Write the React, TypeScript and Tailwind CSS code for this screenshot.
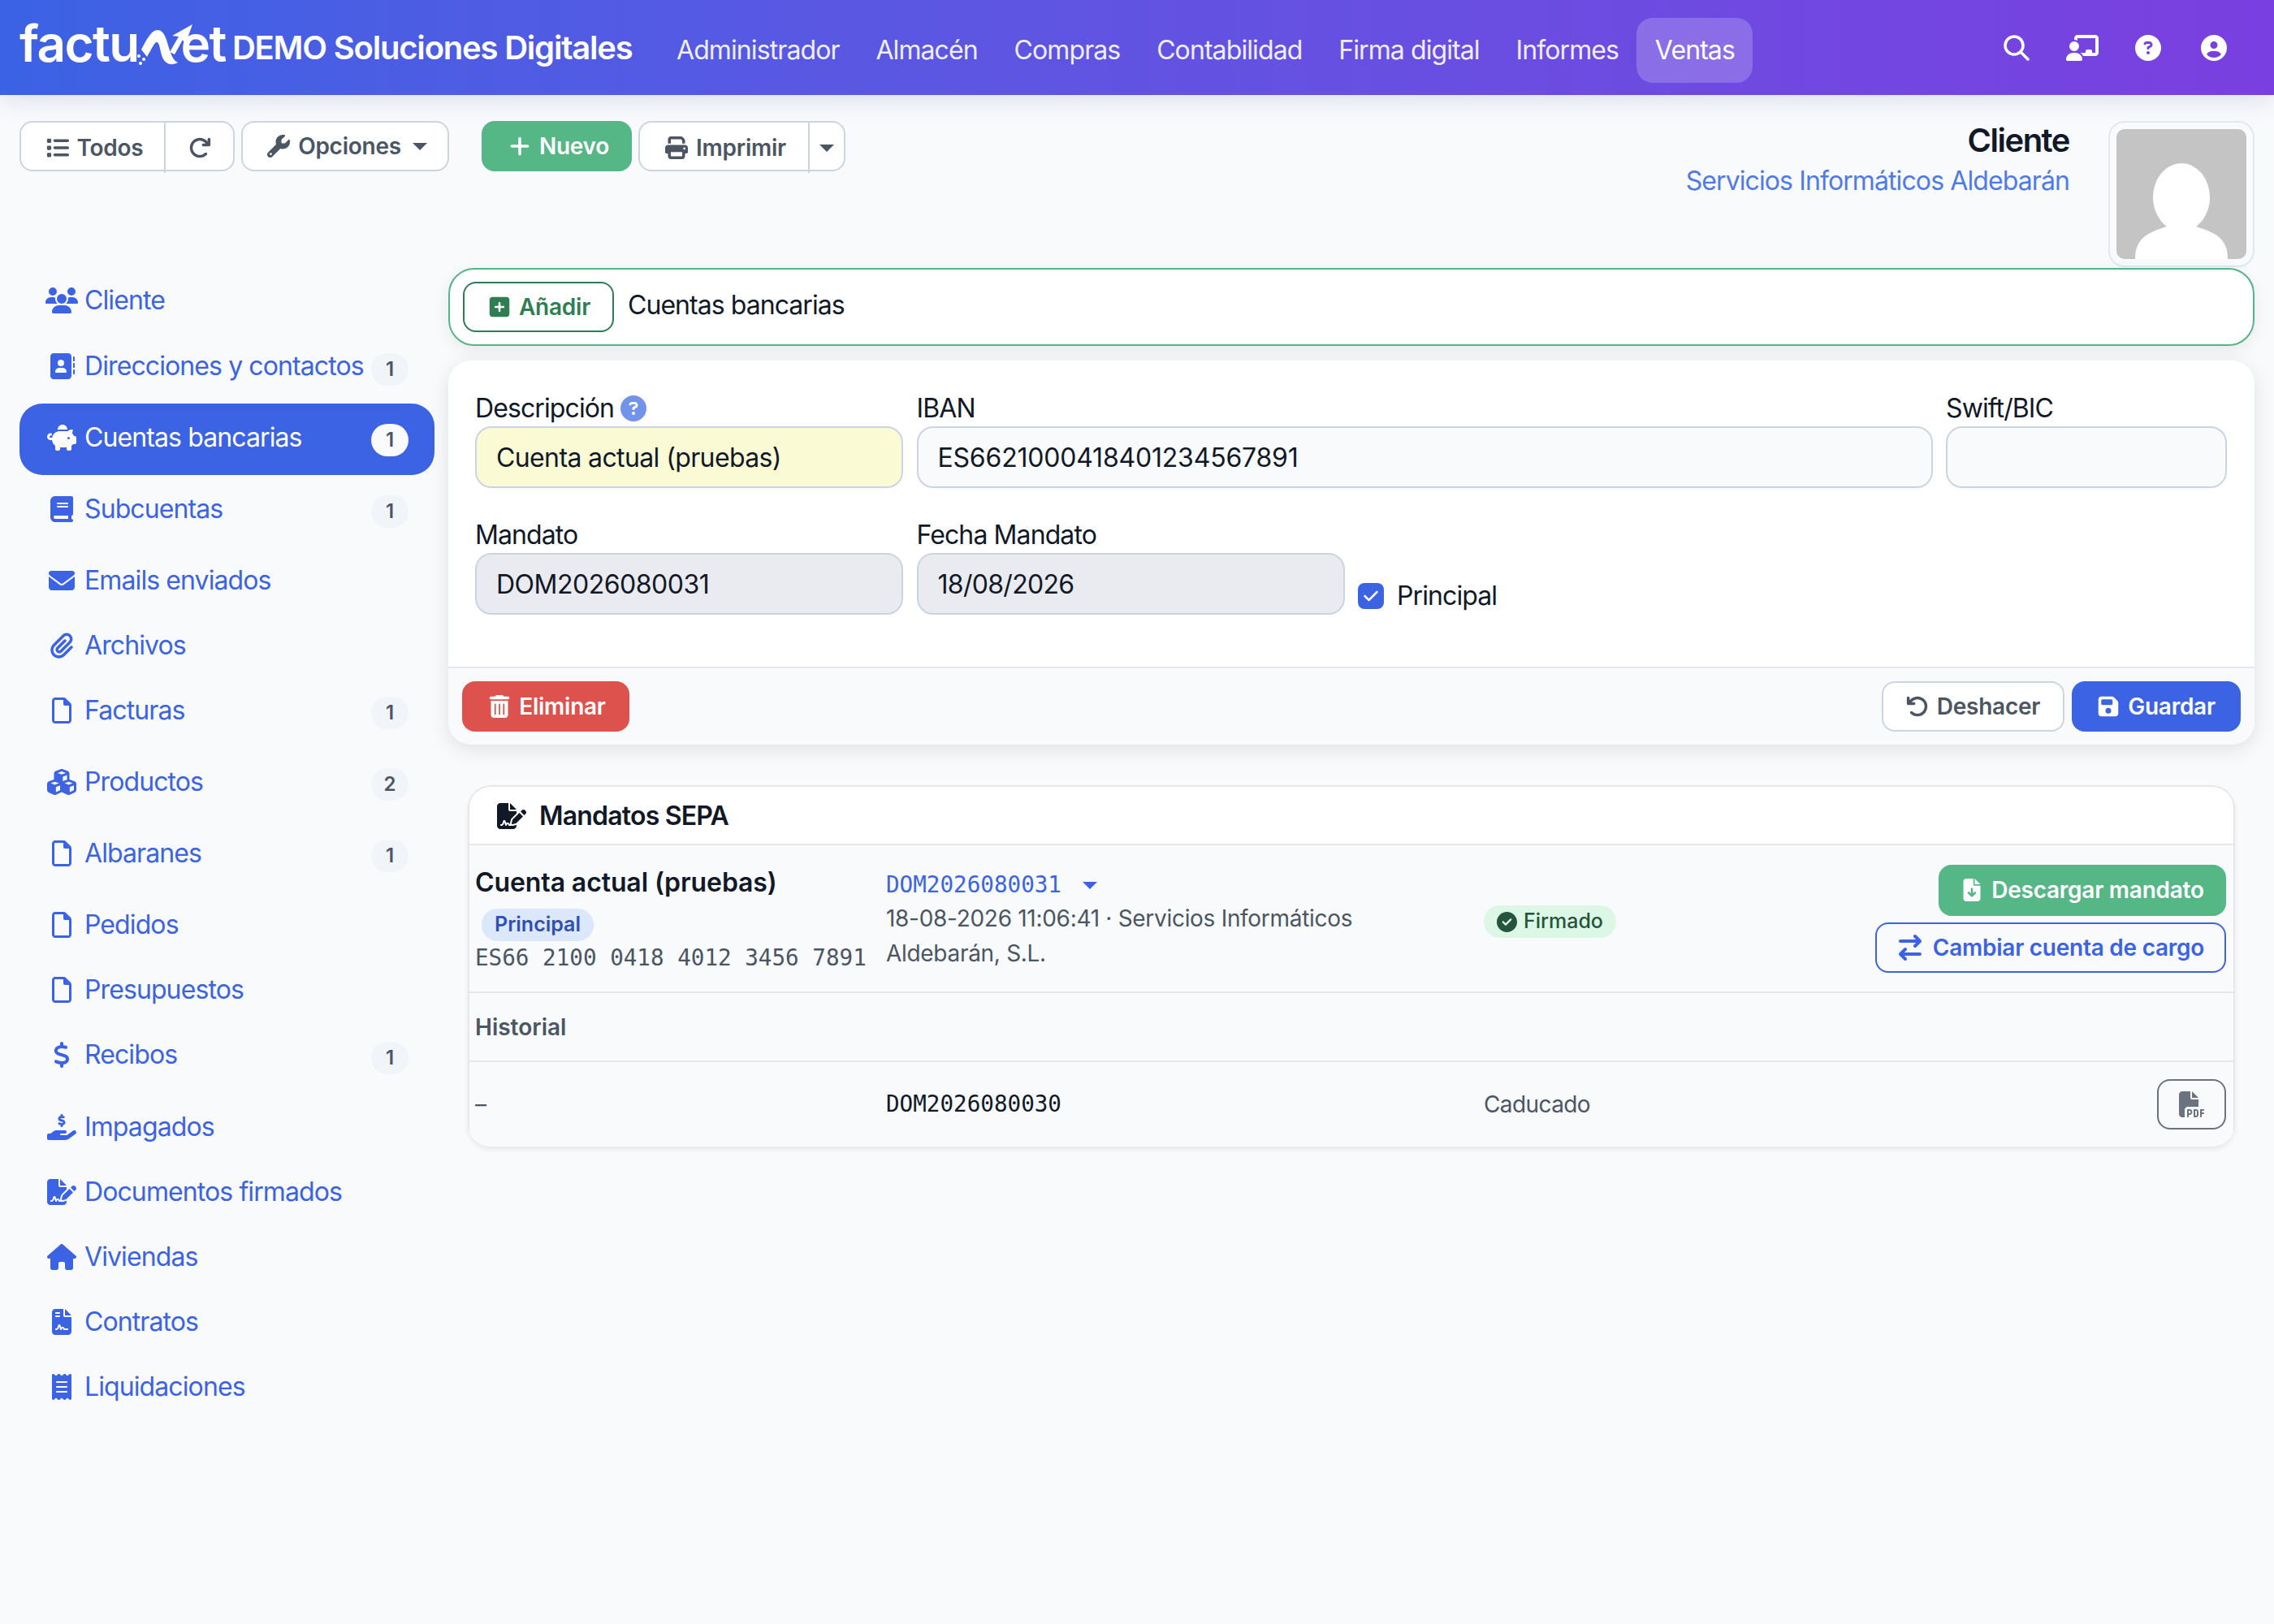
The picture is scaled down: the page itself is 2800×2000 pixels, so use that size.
import React from 'react';
import {
  FaUsers, FaAddressBook, FaPiggyBank, FaBook, FaEnvelope, FaPaperclip, FaRegFile, FaCubes,
  FaDollarSign, FaHandHoldingDollar, FaFileSignature, FaHouse, FaFileContract, FaReceipt, FaList,
  FaArrowRotateRight, FaWrench, FaPlus, FaPrint, FaCircleQuestion, FaCircleUser, FaSquarePlus,
  FaTrashCan, FaArrowRotateLeft, FaFloppyDisk, FaFileArrowDown, FaArrowRightArrowLeft, FaCircleCheck,
  FaChalkboardUser, FaCheck, FaFilePdf,
} from 'react-icons/fa6';

const navItems = ['Administrador', 'Almacén', 'Compras', 'Contabilidad', 'Firma digital', 'Informes', 'Ventas'];

const sideItems = [
  { label: 'Cliente', icon: FaUsers, row: 'h-[80px]' },
  { label: 'Direcciones y contactos', icon: FaAddressBook, badge: '1', row: 'h-[87px]' },
  { label: 'Cuentas bancarias', icon: FaPiggyBank, badge: '1', active: true, row: 'h-[88px]' },
  { label: 'Subcuentas', icon: FaBook, badge: '1', row: 'h-[88px]' },
  { label: 'Emails enviados', icon: FaEnvelope, row: 'h-[80px] pt-[3px]' },
  { label: 'Archivos', icon: FaPaperclip, row: 'h-[80px] pt-[3px]' },
  { label: 'Facturas', icon: FaRegFile, badge: '1', row: 'h-[88px]' },
  { label: 'Productos', icon: FaCubes, badge: '2', row: 'h-[88px]' },
  { label: 'Albaranes', icon: FaRegFile, badge: '1', row: 'h-[88px]' },
  { label: 'Pedidos', icon: FaRegFile, row: 'h-[80px] pt-[3px]' },
  { label: 'Presupuestos', icon: FaRegFile, row: 'h-[80px] pt-[3px]' },
  { label: 'Recibos', icon: FaDollarSign, badge: '1', row: 'h-[89px]' },
  { label: 'Impagados', icon: FaHandHoldingDollar, row: 'h-[80px] pt-[3px]' },
  { label: 'Documentos firmados', icon: FaFileSignature, row: 'h-[80px] pt-[3px]' },
  { label: 'Viviendas', icon: FaHouse, row: 'h-[80px] pt-[3px]' },
  { label: 'Contratos', icon: FaFileContract, row: 'h-[80px] pt-[3px]' },
  { label: 'Liquidaciones', icon: FaReceipt, row: 'h-[80px] pt-[3px]' },
];

// Logo: the N of factuNet is a swoosh with an arrow
const LogoMark = () => (
  <svg viewBox="0 0 72 54" className="w-[72px] h-[54px] shrink-0 mt-[2px]" fill="white">
    <path d="M8 33 C14 22 20 9 28 9 C36 9 39 20 42 31 C45 41 48 47 53 49 C44 54 36 50 33 40 C31 32 30 24 27 24 C24 24 21 32 15 42 Z" />
    <path d="M71 2 L46 16 L54 17 L43 36 L49 39 L59 21 L62 27 Z" />
    <circle cx="5" cy="41" r="2" />
    <circle cx="11" cy="45" r="2" />
    <circle cx="7" cy="50" r="2" />
    <circle cx="41" cy="43" r="1.6" />
  </svg>
);

const Label = ({ children }: { children: React.ReactNode }) => (
  <label className="block h-[48px] pt-[2px] leading-[48px] text-[32px] tracking-[-0.9px] text-[#111827]">{children}</label>
);

const Field = ({ label, value, className }: { label: React.ReactNode; value: string; className: string }) => (
  <div className="min-w-0">
    <Label>{label}</Label>
    <input
      readOnly
      value={value}
      className={`w-full h-[76px] px-[24px] text-[32px] text-[#111827] border-2 border-[#cbd5e1] rounded-[20px] outline-none ${className}`}
    />
  </div>
);

const ToolButton = ({ className, children }: { className: string; children: React.ReactNode }) => (
  <button className={`flex items-center justify-center gap-[10px] h-[62px] text-[28px] font-semibold tracking-[-0.25px] ${className}`}>
    {children}
  </button>
);

const Caret = ({ className }: { className: string }) => (
  <span className={`w-0 h-0 border-x-[9px] border-x-transparent border-t-[9px] ${className}`} />
);

export default function App() {
  return (
    <div className="min-h-screen w-full bg-[#f9fafc] font-['Inter',sans-serif] text-[#111827] antialiased">
      {/* Navbar */}
      <nav className="flex items-center h-[117px] pl-[24px] pr-[58px] bg-gradient-to-r from-[#3b62e4] to-[#7a3fe0] text-white shadow-[0_6px_30px_rgba(40,60,140,0.14)]">
        <div className="flex items-center text-[62px] leading-none font-semibold tracking-[-1.6px] -mt-[10px]">
          <span>factu</span>
          <span className="-ml-[5px] -mr-[15px]"><LogoMark /></span>
          <span>et</span>
        </div>
        <span className="ml-[8px] mt-[1px] text-[40px] font-semibold tracking-[-1.2px] whitespace-nowrap">DEMO Soluciones Digitales</span>
        <div className="flex items-center ml-[32px] mt-[7px]">
          {navItems.map((item) => (
            <a
              key={item}
              className={`flex items-center h-[80px] px-[22.4px] text-[32px] tracking-[-0.9px] rounded-[20px] whitespace-nowrap ${item === 'Ventas' ? 'bg-white/20' : 'text-white/90'}`}
            >
              {item}
            </a>
          ))}
        </div>
        <div className="flex items-center gap-[45px] ml-auto">
          <svg viewBox="0 0 32 32" className="w-[32px] h-[32px]" fill="none" stroke="currentColor" strokeWidth="3.5" strokeLinecap="round">
            <circle cx="13" cy="13" r="11" />
            <path d="M21 21 L30 30" />
          </svg>
          <FaChalkboardUser className="w-[40px] h-[32px]" />
          <FaCircleQuestion className="w-[32px] h-[32px]" />
          <FaCircleUser className="w-[32px] h-[32px] ml-[4px]" />
        </div>
      </nav>

      <div className="px-[24px] pt-[32px]">
        {/* Toolbar and client title */}
        <div className="flex items-start justify-between h-[181px]">
          <div className="flex items-center text-[#4b5563]">
            <div className="flex h-[62px] bg-white border-2 border-[#cbd5e1] rounded-[16px]">
              <ToolButton className="w-[178px] pl-[5px] border-r-2 border-[#cbd5e1]"><FaList />Todos</ToolButton>
              <ToolButton className="w-[83px]"><FaArrowRotateRight /></ToolButton>
            </div>
            <ToolButton className="ml-[8px] w-[256px] pl-[5px] bg-white border-2 border-[#cbd5e1] rounded-[16px]">
              <FaWrench />Opciones<Caret className="border-t-[#4b5563] ml-[4px]" />
            </ToolButton>
            <ToolButton className="ml-[40px] w-[185px] pl-[5px] bg-[#55b686] text-white rounded-[16px]"><FaPlus />Nuevo</ToolButton>
            <div className="flex h-[62px] ml-[8px] bg-white border-2 border-[#cbd5e1] rounded-[16px]">
              <ToolButton className="w-[209px] pl-[4px] border-r-2 border-[#cbd5e1]"><FaPrint />Imprimir</ToolButton>
              <ToolButton className="w-[42px]"><Caret className="border-t-[#4b5563]" /></ToolButton>
            </div>
          </div>
          <div className="flex items-start">
            <div className="text-right mr-[48px]">
              <div className="h-[52px] leading-[52px] text-[40px] font-semibold tracking-[-1.5px] -mt-[2px]">Cliente</div>
              <div className="text-[32px] tracking-[-0.9px] text-[#4f7be8]">Servicios Informáticos Aldebarán</div>
            </div>
            <div className="w-[180px] h-[180px] p-[8px] bg-[#f8fafc] border-2 border-[#e2e8f0] rounded-[20px]">
              <svg viewBox="0 0 160 160" className="w-full h-full rounded-[10px]">
                <rect width="160" height="160" fill="#c4c4c4" />
                <ellipse cx="80" cy="84" rx="35" ry="42" fill="#fff" />
                <path d="M23 160 C23 136 36 128 62 120 L98 120 C124 128 137 136 137 160 Z" fill="#fff" />
              </svg>
            </div>
          </div>
        </div>

        <div className="flex items-start">
          {/* Sidebar */}
          <aside className="w-[511px] shrink-0 mr-[17px] text-[32px] tracking-[-0.9px] text-[#3b63e4]">
            {sideItems.map(({ label, icon: Icon, badge, active, row }) => (
              <a
                key={label}
                className={`flex items-center pl-[32px] pr-[32px] rounded-[28px] ${row} ${active ? 'bg-[#3b63e4] text-white' : ''}`}
              >
                <Icon className={`w-[40px] h-[32px] mr-[8px] shrink-0 ${badge ? '-mt-[5px]' : ''}`} />
                <span className={`whitespace-nowrap ${badge ? '-mt-[5px]' : ''}`}>{label}</span>
                {badge && (
                  <span className={`ml-auto flex items-center justify-center w-[46px] h-[40px] mt-[2px] rounded-full text-[24px] font-semibold tracking-normal text-[#4b5563] shrink-0 ${active ? 'bg-[#f8fafc]' : 'bg-[#f1f5f9]'}`}>
                    {badge}
                  </span>
                )}
              </a>
            ))}
          </aside>

          {/* Main */}
          <main className="flex-1 min-w-0">
            <div className="flex items-center h-[96px] pl-[16px] bg-white border-2 border-[#54b586] rounded-[32px] shadow-[0_6px_20px_rgba(0,0,0,0.07)]">
              <button className="flex items-center justify-center gap-[10px] w-[186px] h-[62px] pl-[2px] border-2 border-[#2f7d52] rounded-[16px] text-[28px] font-semibold tracking-[-0.25px] text-[#2f7d52]">
                <FaSquarePlus />Añadir
              </button>
              <span className="ml-[17px] -mt-[4px] text-[32px] tracking-[-0.95px]">Cuentas bancarias</span>
            </div>

            <section className="mt-[18px] bg-white rounded-[28px] shadow-[0_6px_24px_rgba(0,0,0,0.1)] overflow-hidden">
              <div className="h-[377px] px-[33px] pt-[33px]">
                <div className="grid grid-cols-[527px_1251px_346px] gap-x-[16.5px]">
                  <Field
                    label={<span className="flex items-center gap-[8px]">Descripción<FaCircleQuestion className="text-[#7194ea]" /></span>}
                    value="Cuenta actual (pruebas)"
                    className="bg-[#fafbd4] tracking-[-0.62px]"
                  />
                  <Field label="IBAN" value="ES6621000418401234567891" className="bg-[#f8fafc] tracking-[-0.2px]" />
                  <Field label="Swift/BIC" value="" className="bg-[#f8fafc]" />
                </div>
                <div className="grid grid-cols-[527px_527px_1fr] gap-x-[16.5px] mt-[32px]">
                  <Field label="Mandato" value="DOM2026080031" className="bg-[#e9ebf0] tracking-[-0.5px]" />
                  <Field label="Fecha Mandato" value="18/08/2026" className="bg-[#e9ebf0] tracking-[-0.7px]" />
                  <label className="flex items-center gap-[16px] self-end h-[60px] -mb-[7px] text-[32px] tracking-[-0.9px]">
                    <span className="flex items-center justify-center w-[32px] h-[32px] rounded-[8px] bg-[#3b63e4] text-white text-[20px]"><FaCheck /></span>
                    Principal
                  </label>
                </div>
              </div>
              <div className="flex items-center justify-between h-[96px] px-[17px] bg-[#f8fafc] border-t-2 border-[#e5e7eb]">
                <ToolButton className="w-[206px] pl-[3px] bg-[#de524e] text-white rounded-[16px]"><FaTrashCan />Eliminar</ToolButton>
                <div className="flex gap-[9px]">
                  <ToolButton className="w-[225px] bg-white border-2 border-[#cbd5e1] text-[#4b5563] rounded-[16px]"><FaArrowRotateLeft />Deshacer</ToolButton>
                  <ToolButton className="w-[208px] bg-[#3b63e4] text-white rounded-[16px]"><FaFloppyDisk />Guardar</ToolButton>
                </div>
              </div>
            </section>

            {/* Mandatos SEPA */}
            <section className="mt-[50px] mx-[24px] rounded-[28px] shadow-[0_4px_6px_rgba(0,0,0,0.07)] overflow-hidden">
              <div className="flex items-center h-[72px] pl-[34px] pt-[2px] bg-white border-2 border-b-0 border-[#e5e7eb] rounded-t-[28px] text-[32px] font-semibold tracking-[-0.8px]">
                <FaFileSignature className="w-[36px] h-[32px] mr-[16px] text-[#111827]" />Mandatos SEPA
              </div>
              <div className="grid grid-cols-[506px_736px_1fr] h-[182px] pl-[7px] pr-[9px] bg-[#f8fafc] border-2 border-b-0 border-[#e5e7eb]">
                <div className="pt-[26px]">
                  <div className="h-[40px] leading-[40px] text-[32px] font-semibold tracking-[-0.1px]">Cuenta actual (pruebas)</div>
                  <span className="inline-flex items-center h-[40px] px-[16px] mt-[12px] ml-[8px] rounded-full bg-[#dbe7fb] text-[25px] font-semibold text-[#2f4fb5]">Principal</span>
                  <div className="font-['DejaVu_Sans_Mono',monospace] text-[27.6px] text-[#4b5563] whitespace-nowrap">ES66 2100 0418 4012 3456 7891</div>
                </div>
                <div className="pt-[31px]">
                  <div className="flex items-center h-[36px] font-['DejaVu_Sans_Mono',monospace] text-[27.6px] text-[#3b63e4]">
                    DOM2026080031
                    <Caret className="ml-[26px] border-t-[#3b63e4]" />
                  </div>
                  <div className="w-[620px] mt-[2px] text-[28px] leading-[43px] tracking-[-0.3px] text-[#4b5563]">18-08-2026 11:06:41 · Servicios Informáticos Aldebarán, S.L.</div>
                </div>
                <div className="flex items-center justify-between">
                  <span className="inline-flex items-center gap-[8px] h-[40px] px-[16px] mt-[8px] rounded-full bg-[#dcf7e6] text-[25px] font-medium text-[#24553c]">
                    <FaCircleCheck />Firmado
                  </span>
                  <div className="flex flex-col items-end gap-[8px]">
                    <ToolButton className="w-[354px] h-[63px] bg-[#55b686] text-white rounded-[16px]"><FaFileArrowDown />Descargar mandato</ToolButton>
                    <ToolButton className="w-[432px] gap-[12px] border-2 border-[#3b63e4] text-[#3b63e4] rounded-[16px]"><FaArrowRightArrowLeft className="text-[32px]" />Cambiar cuenta de cargo</ToolButton>
                  </div>
                </div>
              </div>
              <div className="flex items-center h-[85px] pl-[7px] bg-[#f8fafc] border-2 border-b-0 border-[#e5e7eb] text-[28px] font-semibold text-[#4b5563]">Historial</div>
              <div className="grid grid-cols-[506px_736px_1fr] items-center h-[106px] pl-[7px] pr-[9px] bg-[#f8fafc] border-x-2 border-t-2 border-[#e5e7eb]">
                <span className="text-[28px] text-[#4b5563]">–</span>
                <span className="font-['DejaVu_Sans_Mono',monospace] text-[27.6px]">DOM2026080030</span>
                <div className="flex items-center justify-between">
                  <span className="text-[28px] tracking-[-0.6px] text-[#4b5563]">Caducado</span>
                  <button className="flex items-center justify-center w-[85px] h-[62px] border-2 border-[#6b7280] rounded-[16px] text-[32px] text-[#6b7280]"><FaFilePdf /></button>
                </div>
              </div>
            </section>
          </main>
        </div>
      </div>
    </div>
  );
}
